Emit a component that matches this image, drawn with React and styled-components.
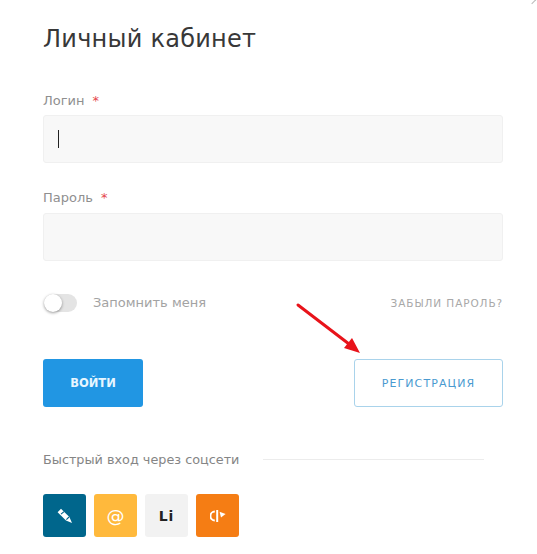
import styled, { createGlobalStyle } from "styled-components";

const GlobalStyle = createGlobalStyle`
  html, body {
    margin: 0;
    padding: 0;
    background: #fff;
  }
  body {
    font-family: "DejaVu Sans", "Noto Sans", sans-serif;
  }
`;

const PencilIcon = () => (
  <svg width="18" height="18" viewBox="0 0 18 18">
    <path d="M1.6 5.2 L5 1.8 L13.4 10 L16 16 L10 13.6 Z" fill="#fff" />
    <path d="M5 7.2 L8 4.6 M10.4 12.6 L13 10" stroke="#00668c" strokeWidth="1.1" fill="none" />
  </svg>
);

const OkIcon = () => (
  <svg width="16" height="12" viewBox="0 0 16 12" fill="none">
    <path d="M4.8 1.6 A4.4 4.4 0 0 0 4.8 10.4" stroke="#fff" strokeWidth="2" />
    <path d="M7.2 0 V12" stroke="#fff" strokeWidth="2" />
    <path d="M9.6 1.8 L15.6 4 L11 7.4 Z" fill="#fff" />
  </svg>
);

const App = () => {
  return (
    <St.Page>
      <GlobalStyle />
      <St.Corner />
      <St.Title>Личный кабинет</St.Title>

      <St.Field>
        <St.Label>
          Логин<St.Star>*</St.Star>
        </St.Label>
        <St.Input>
          <St.Caret />
        </St.Input>
      </St.Field>

      <St.Field $top={27}>
        <St.Label $gap={7}>
          Пароль<St.Star>*</St.Star>
        </St.Label>
        <St.Input />
      </St.Field>

      <St.OptionsRow>
        <St.Remember>
          <St.Toggle>
            <St.Knob />
          </St.Toggle>
          <St.RememberText>Запомнить меня</St.RememberText>
        </St.Remember>
        <St.Forgot>Забыли пароль?</St.Forgot>
      </St.OptionsRow>

      <St.ButtonsRow>
        <St.LoginButton>Войти</St.LoginButton>
        <St.RegisterWrap>
          <St.Arrow width="70" height="58" viewBox="0 0 70 58">
            <path d="M3 6 L54 45" stroke="#e8131a" strokeWidth="3" strokeLinecap="round" />
            <path d="M65 54 L49 49 L57 39 Z" fill="#e8131a" />
          </St.Arrow>
          <St.RegisterButton>Регистрация</St.RegisterButton>
        </St.RegisterWrap>
      </St.ButtonsRow>

      <St.QuickRow>
        <St.QuickText>Быстрый вход через соцсети</St.QuickText>
        <St.QuickLine />
      </St.QuickRow>

      <St.Socials>
        <St.Social $bg="#00668c">
          <PencilIcon />
        </St.Social>
        <St.Social $bg="#ffb93c">
          <St.SocialGlyph>@</St.SocialGlyph>
        </St.Social>
        <St.Social $bg="#f2f2f2" $color="#222">
          <St.SocialText>Li</St.SocialText>
        </St.Social>
        <St.Social $bg="#f57d14">
          <OkIcon />
        </St.Social>
      </St.Socials>
    </St.Page>
  );
};

export default App;

const St = {
  Page: styled.div`
    position: relative;
    box-sizing: border-box;
    width: 537px;
    height: 554px;
    padding: 25px 34px 0 43px;
    overflow: hidden;
    background: #fff;
  `,
  Corner: styled.div`
    position: absolute;
    top: -3px;
    right: 2px;
    width: 5px;
    height: 5px;
    border-top: 1px solid #bbb;
    border-right: 1px solid #bbb;
    transform: rotate(45deg);
  `,
  Title: styled.h1`
    margin: 0;
    font-size: 24px;
    line-height: 29px;
    font-weight: 400;
    letter-spacing: 0.25px;
    color: #383838;
  `,
  Field: styled.div`
    margin-top: ${({ $top }) => $top ?? 39}px;
  `,
  Label: styled.div`
    height: 16px;
    margin-bottom: ${({ $gap }) => $gap ?? 6}px;
    font-size: 13px;
    line-height: 16px;
    color: #8f8f8f;
  `,
  Star: styled.span`
    margin-left: 8px;
    color: #e5484d;
  `,
  Input: styled.div`
    display: flex;
    align-items: center;
    box-sizing: border-box;
    height: 48px;
    padding-left: 14px;
    background: #f8f8f8;
    border: 1px solid #f0f0f0;
    border-radius: 3px;
  `,
  Caret: styled.div`
    width: 1px;
    height: 18px;
    background: #222;
  `,
  OptionsRow: styled.div`
    display: flex;
    justify-content: space-between;
    align-items: center;
    height: 20px;
    margin-top: 32px;
  `,
  Remember: styled.div`
    display: flex;
    align-items: center;
    gap: 16px;
  `,
  Toggle: styled.div`
    position: relative;
    width: 33px;
    height: 18px;
    margin-left: 1px;
    background: #e4e4e4;
    border-radius: 9px;
  `,
  Knob: styled.div`
    position: absolute;
    top: 0;
    left: 0;
    width: 18px;
    height: 18px;
    background: #fff;
    border-radius: 50%;
    box-shadow: 0 1px 3px rgba(0, 0, 0, 0.4);
  `,
  RememberText: styled.span`
    margin-bottom: 2px;
    font-size: 13px;
    color: #a3a3a3;
  `,
  Forgot: styled.span`
    font-size: 10.5px;
    letter-spacing: 0.9px;
    text-transform: uppercase;
    color: #a8a8a8;
  `,
  ButtonsRow: styled.div`
    display: flex;
    justify-content: space-between;
    margin-top: 46px;
  `,
  LoginButton: styled.button`
    width: 100px;
    height: 48px;
    padding: 0;
    border: none;
    border-radius: 3px;
    background: #2196e3;
    font-family: inherit;
    font-size: 11.5px;
    font-weight: 700;
    text-transform: uppercase;
    color: #e8f6ff;
  `,
  RegisterWrap: styled.div`
    position: relative;
  `,
  Arrow: styled.svg`
    position: absolute;
    top: -60px;
    left: -59px;
  `,
  RegisterButton: styled.button`
    width: 149px;
    height: 48px;
    padding: 0;
    background: #fff;
    border: 1px solid #a9d3eb;
    border-radius: 3px;
    font-family: inherit;
    font-size: 11px;
    letter-spacing: 1.1px;
    text-transform: uppercase;
    color: #4a9ad0;
  `,
  QuickRow: styled.div`
    display: flex;
    align-items: center;
    gap: 24px;
    height: 20px;
    margin-top: 42px;
    padding-right: 19px;
  `,
  QuickText: styled.span`
    width: 196px;
    font-size: 12.8px;
    white-space: nowrap;
    color: #858585;
  `,
  QuickLine: styled.div`
    flex: 1;
    height: 1px;
    background: #ececec;
  `,
  Socials: styled.div`
    display: flex;
    gap: 8px;
    margin-top: 25px;
  `,
  Social: styled.div`
    display: flex;
    justify-content: center;
    align-items: center;
    width: 43px;
    height: 43px;
    border-radius: 3px;
    background: ${({ $bg }) => $bg};
    color: ${({ $color }) => $color ?? "#fff"};
  `,
  SocialGlyph: styled.span`
    font-size: 18px;
    line-height: 1;
  `,
  SocialText: styled.span`
    font-size: 14px;
    font-weight: 700;
    letter-spacing: 1px;
  `,
};
